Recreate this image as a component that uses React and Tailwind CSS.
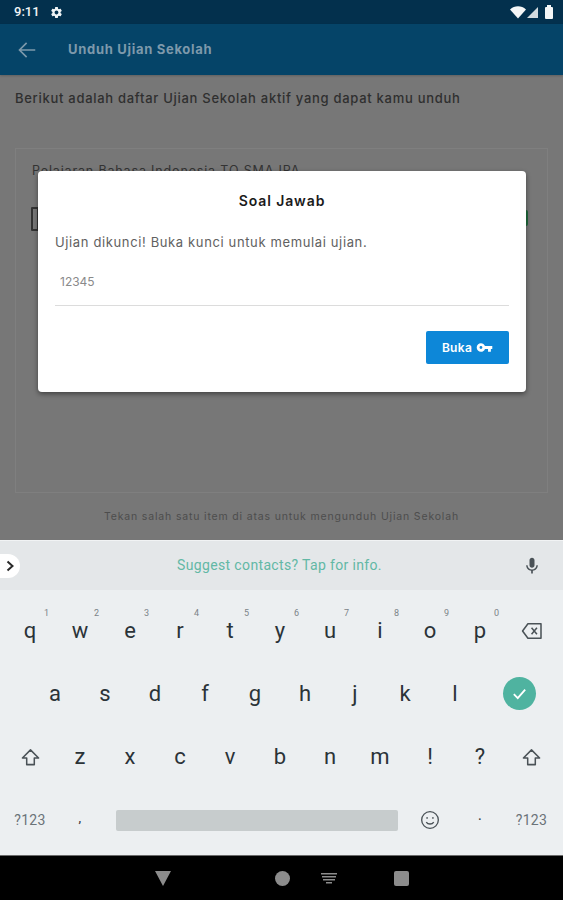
import React from 'react';

const row1 = [['q', '1'], ['w', '2'], ['e', '3'], ['r', '4'], ['t', '5'], ['y', '6'], ['u', '7'], ['i', '8'], ['o', '9'], ['p', '0']];
const row2 = ['a', 's', 'd', 'f', 'g', 'h', 'j', 'k', 'l'];
const row3 = ['z', 'x', 'c', 'v', 'b', 'n', 'm', '!', '?'];

const ShiftIcon = () => (
  <svg width="19" height="19" viewBox="0 0 20 20" fill="none" stroke="#4a5257" strokeWidth="1.6" strokeLinejoin="round">
    <path d="M10 2 L18.5 10.5 H14 V17.5 H6 V10.5 H1.5 Z" />
  </svg>
);

const Key = ({ children }) => (
  <div className="flex items-center justify-center font-['Roboto',sans-serif] text-[22px] leading-none text-[#2b3338]">{children}</div>
);

const StatusBar = () => (
  <div className="flex h-6 items-center justify-between bg-[#03304d] pl-[14px] pr-[10px]">
    <div className="flex items-center gap-[10px]">
      <span className="font-['Roboto',sans-serif] text-[13px] font-medium text-[#f1f4f6]">9:11</span>
      <svg width="13" height="13" viewBox="0 0 24 24" fill="#f1f4f6">
        <path d="M19.43 12.98c.04-.32.07-.64.07-.98s-.03-.66-.07-.98l2.11-1.65c.19-.15.24-.42.12-.64l-2-3.46c-.12-.22-.39-.3-.61-.22l-2.49 1c-.52-.4-1.08-.73-1.69-.98l-.38-2.65C14.46 2.18 14.25 2 14 2h-4c-.25 0-.46.18-.49.42l-.38 2.65c-.61.25-1.17.59-1.69.98l-2.49-1c-.23-.09-.49 0-.61.22l-2 3.46c-.13.22-.07.49.12.64l2.11 1.65c-.04.32-.07.65-.07.98s.03.66.07.98l-2.11 1.65c-.19.15-.24.42-.12.64l2 3.46c.12.22.39.3.61.22l2.49-1c.52.4 1.08.73 1.69.98l.38 2.65c.03.24.24.42.49.42h4c.25 0 .46-.18.49-.42l.38-2.65c.61-.25 1.17-.59 1.69-.98l2.49 1c.23.09.49 0 .61-.22l2-3.46c.12-.22.07-.49-.12-.64l-2.11-1.65zM12 15.5c-1.93 0-3.5-1.57-3.5-3.5s1.57-3.5 3.5-3.5 3.5 1.57 3.5 3.5-1.57 3.5-3.5 3.5z" />
      </svg>
    </div>
    <div className="flex items-center gap-[4px]">
      <svg width="16" height="13" viewBox="0 0 16 13" fill="#f4f6f7">
        <path d="M0 3.5 C4.5 -0.8 11.5 -0.8 16 3.5 L8 12.5 Z" />
      </svg>
      <svg width="11" height="11" viewBox="0 0 11 11" fill="#d3dade" className="-ml-[3px]">
        <path d="M11 0 V11 H0 Z" />
      </svg>
      <div className="ml-[3px] flex flex-col items-center">
        <div className="h-[2px] w-[4px] bg-[#f4f6f7]" />
        <div className="h-[12px] w-[8px] rounded-[1px] bg-[#f4f6f7]" />
      </div>
    </div>
  </div>
);

const Dialog = () => (
  <div className="absolute left-[38px] top-[96px] h-[221px] w-[488px] rounded-[4px] bg-white px-[17px] pt-[22px] shadow-[0_2px_5px_rgba(0,0,0,0.45)]">
    <div className="text-center text-[14px] font-semibold leading-4 tracking-[0.9px] text-[#1b1b1b]">Soal Jawab</div>
    <div className="mt-[24px] text-[13px] leading-[18px] tracking-[0.63px] text-[#616161]">Ujian dikunci! Buka kunci untuk memulai ujian.</div>
    <div className="mt-[13px] h-[42px] border-b border-[#dcdcdc] pl-[5px] pt-[9px] text-[12px] leading-[18px] text-[#8a8a8a]">12345</div>
    <div className="mt-[25px] flex justify-end">
      <button className="flex h-[33px] w-[83px] items-center justify-center gap-[4px] rounded-[2px] bg-[#0d87d8] text-[12px] font-semibold tracking-[0.3px] text-white">
        Buka
        <svg width="17" height="17" viewBox="0 0 24 24" fill="#ffffff">
          <path d="M12.65 10C11.83 7.67 9.61 6 7 6c-3.31 0-6 2.69-6 6s2.69 6 6 6c2.61 0 4.83-1.67 5.65-4H17v4h4v-4h2v-4H12.65zM7 14c-1.1 0-2-.9-2-2s.9-2 2-2 2 .9 2 2-.9 2-2 2z" />
        </svg>
      </button>
    </div>
  </div>
);

const Keyboard = () => (
  <div className="flex h-[315px] flex-col">
    <div className="flex h-[50px] items-center justify-between border-t border-[#f1f3f4] bg-[#e4e7e9] pr-[21px]">
      <div className="flex h-[24px] w-[20px] items-center justify-center rounded-r-full bg-white">
        <svg width="10" height="12" viewBox="0 0 10 12" fill="none" stroke="#2a2a2a" strokeWidth="2">
          <path d="M2.5 1.5 L7.5 6 L2.5 10.5" />
        </svg>
      </div>
      <span className="ml-[17px] font-['Roboto',sans-serif] text-[14px] tracking-[0.35px] text-[#62b8a5]">Suggest contacts? Tap for info.</span>
      <svg width="20" height="20" viewBox="0 0 24 24" fill="#4a5257">
        <path d="M12 14c1.66 0 3-1.34 3-3V5c0-1.66-1.34-3-3-3S9 3.34 9 5v6c0 1.66 1.34 3 3 3zm5.3-3c0 3-2.54 5.1-5.3 5.1S6.7 14 6.7 11H5c0 3.41 2.72 6.23 6 6.72V21h2v-3.28c3.28-.48 6-3.3 6-6.72h-1.7z" />
      </svg>
    </div>
    <div className="grid flex-1 grid-rows-[62px_63px_64px_62px] bg-[#eceff1] pb-[4px] pl-[5px] pt-[10px]">
      <div className="grid grid-cols-[repeat(10,50px)_53px]">
        {row1.map(([letter, digit]) => (
          <div key={letter} className="relative flex items-center justify-center font-['Roboto',sans-serif] text-[22px] leading-none text-[#2b3338]">
            {letter}
            <span className="absolute right-[6px] top-[9px] text-[9px] text-[#7b8388]">{digit}</span>
          </div>
        ))}
        <div className="flex items-center justify-center">
          <svg width="22" height="18" viewBox="0 0 24 20" fill="none" stroke="#4a5257" strokeWidth="1.7" strokeLinejoin="round">
            <path d="M7.5 2 H22 V18 H7.5 L1.5 10 Z" />
            <path d="M11.5 6.5 L17.5 13.5 M17.5 6.5 L11.5 13.5" />
          </svg>
        </div>
      </div>
      <div className="flex pl-[25px]">
        <div className="grid grid-cols-[repeat(9,50px)]">
          {row2.map((letter) => (
            <Key key={letter}>{letter}</Key>
          ))}
        </div>
        <div className="flex w-[78px] items-center justify-center">
          <div className="flex h-[33px] w-[33px] items-center justify-center rounded-full bg-[#4fb3a0]">
            <svg width="17" height="17" viewBox="0 0 24 24" fill="none" stroke="#ffffff" strokeWidth="2.6">
              <path d="M4 13 L9.5 18.5 L20 6.5" />
            </svg>
          </div>
        </div>
      </div>
      <div className="grid grid-cols-[repeat(10,50px)_53px]">
        <div className="flex items-center justify-center"><ShiftIcon /></div>
        {row3.map((letter) => (
          <Key key={letter}>{letter}</Key>
        ))}
        <div className="flex items-center justify-center"><ShiftIcon /></div>
      </div>
      <div className="grid grid-cols-[repeat(10,50px)_53px] font-['Roboto',sans-serif] text-[14px] tracking-[0.3px] text-[#6b7378]">
        <div className="flex items-center justify-center">?123</div>
        <div className="flex items-center justify-center pb-[2px] text-[11px] font-bold text-[#3a4246]">,</div>
        <div className="col-span-6 flex items-center justify-center">
          <div className="ml-[4px] h-[21px] w-[282px] rounded-[2px] bg-[#c7cccd]" />
        </div>
        <div className="flex items-center justify-center">
          <svg width="20" height="20" viewBox="0 0 24 24" fill="none" stroke="#4a5257" strokeWidth="1.6">
            <circle cx="12" cy="12" r="10" />
            <circle cx="8.5" cy="9.5" r="1" fill="#4a5257" stroke="none" />
            <circle cx="15.5" cy="9.5" r="1" fill="#4a5257" stroke="none" />
            <path d="M7.5 14.5 C9.5 17.5 14.5 17.5 16.5 14.5" />
          </svg>
        </div>
        <div className="flex items-center justify-center pb-[6px] text-[11px] font-bold text-[#3a4246]">.</div>
        <div className="flex items-center justify-center">?123</div>
      </div>
    </div>
  </div>
);

const NavBar = () => (
  <div className="flex h-[45px] items-center border-t border-[#6a6a6a] bg-black pl-[155px]">
    <svg width="16" height="15" viewBox="0 0 16 15" fill="#8c8c8c">
      <path d="M0 0 H16 L8 15 Z" />
    </svg>
    <div className="ml-[104px] h-[15px] w-[15px] rounded-full bg-[#8c8c8c]" />
    <svg width="16" height="11" viewBox="0 0 16 11" fill="#8c8c8c" className="ml-[31px]">
      <path d="M0 0 H16 V1.5 H0 Z M1 3 H15 V4.5 H1 Z M2 6 H14 V7.5 H2 Z M5 9 H11 V10.5 H5 Z" />
    </svg>
    <div className="ml-[57px] h-[15px] w-[15px] rounded-[2px] bg-[#8c8c8c]" />
  </div>
);

export default function App() {
  return (
    <div className="flex h-[900px] w-[563px] flex-col overflow-hidden bg-[#777777] font-['Inter',sans-serif]">
      <StatusBar />
      <div className="flex h-[51px] items-center gap-[32px] bg-[#054468] pl-[18px] shadow-[0_1px_2px_rgba(0,0,0,0.2)]">
        <svg width="18" height="18" viewBox="0 0 24 24" fill="none" stroke="#7d99ab" strokeWidth="2.2">
          <path d="M23 12 H2 M11.5 2.5 L2 12 L11.5 21.5" />
        </svg>
        <span className="text-[13px] font-bold tracking-[0.7px] text-[#7d99ab]">Unduh Ujian Sekolah</span>
      </div>
      <div className="relative flex-1 px-[15px] pt-[14px]">
        <p className="text-[13px] font-medium leading-[18px] tracking-[0.71px] text-[#2f2f2f]">Berikut adalah daftar Ujian Sekolah aktif yang dapat kamu unduh</p>
        <div className="mt-[41px] h-[345px] border border-[#7f7f7f] px-[16px] pt-[14px]">
          <div className="text-[12.5px] leading-[16px] tracking-[0.85px] text-[#333333]">Pelajaran Bahasa Indonesia TO SMA IPA</div>
          <div className="mt-[28px] flex items-start justify-between">
            <div className="-ml-[1px] h-[24px] w-[8px] rounded-[1px] border-2 border-[#333333]" />
            <div className="mr-[3px] mt-[3px] h-[16px] w-[20px] rounded-[2px] bg-[#1f6a3c]" />
          </div>
        </div>
        <div className="mt-[17px] text-center text-[10.5px] leading-[14px] tracking-[0.83px] text-[#4d4d4d]">Tekan salah satu item di atas untuk mengunduh Ujian Sekolah</div>
        <Dialog />
      </div>
      <Keyboard />
      <NavBar />
    </div>
  );
}
